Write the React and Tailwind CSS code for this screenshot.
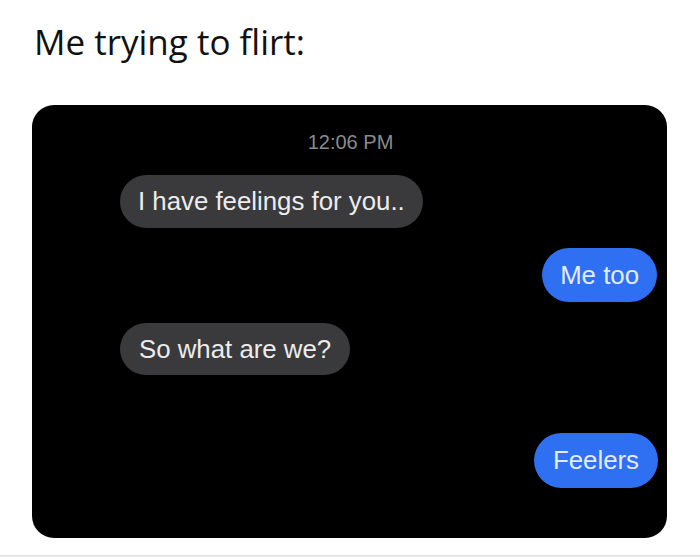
export default function App() {
  return (
    <div className="w-[700px] h-[557px] bg-white relative overflow-hidden" style={{ fontFamily: '"Liberation Sans", Arial, sans-serif' }}>
      <div className="pl-[34px] pt-[24px] h-[105px]">
        <h1 className="text-[35px] leading-none text-[#111]" style={{ fontFamily: '"Open Sans", sans-serif' }}>Me trying to flirt:</h1>
      </div>
      <div className="ml-[32px] w-[635px] h-[433px] bg-black rounded-[22px] pt-[27px] flex flex-col">
        <div className="text-center text-[20px] leading-none text-[#8a8a8e] pl-[2px]">12:06 PM</div>
        <div className="mt-[23px] pl-[88px] flex">
          <div className="h-[53px] px-[18px] flex items-center rounded-full bg-[#3a3a3c] text-[#ececec] text-[25.8px]">I have feelings for you..</div>
        </div>
        <div className="mt-[20px] pr-[10px] flex justify-end">
          <div className="h-[54px] px-[18px] flex items-center rounded-full bg-[#2f6ff2] text-[#e3ecff] text-[25.8px]">Me too</div>
        </div>
        <div className="mt-[21px] pl-[88px] flex">
          <div className="h-[52px] px-[19px] flex items-center rounded-full bg-[#3a3a3c] text-[#ececec] text-[25.8px]">So what are we?</div>
        </div>
        <div className="mt-[58px] pr-[9px] flex justify-end">
          <div className="h-[55px] px-[19px] flex items-center rounded-full bg-[#2f6ff2] text-[#e3ecff] text-[25.8px]">Feelers</div>
        </div>
      </div>
      <div className="absolute left-0 right-0 bottom-0 h-[2px] bg-[#e6e6e6]"></div>
    </div>
  );
}
